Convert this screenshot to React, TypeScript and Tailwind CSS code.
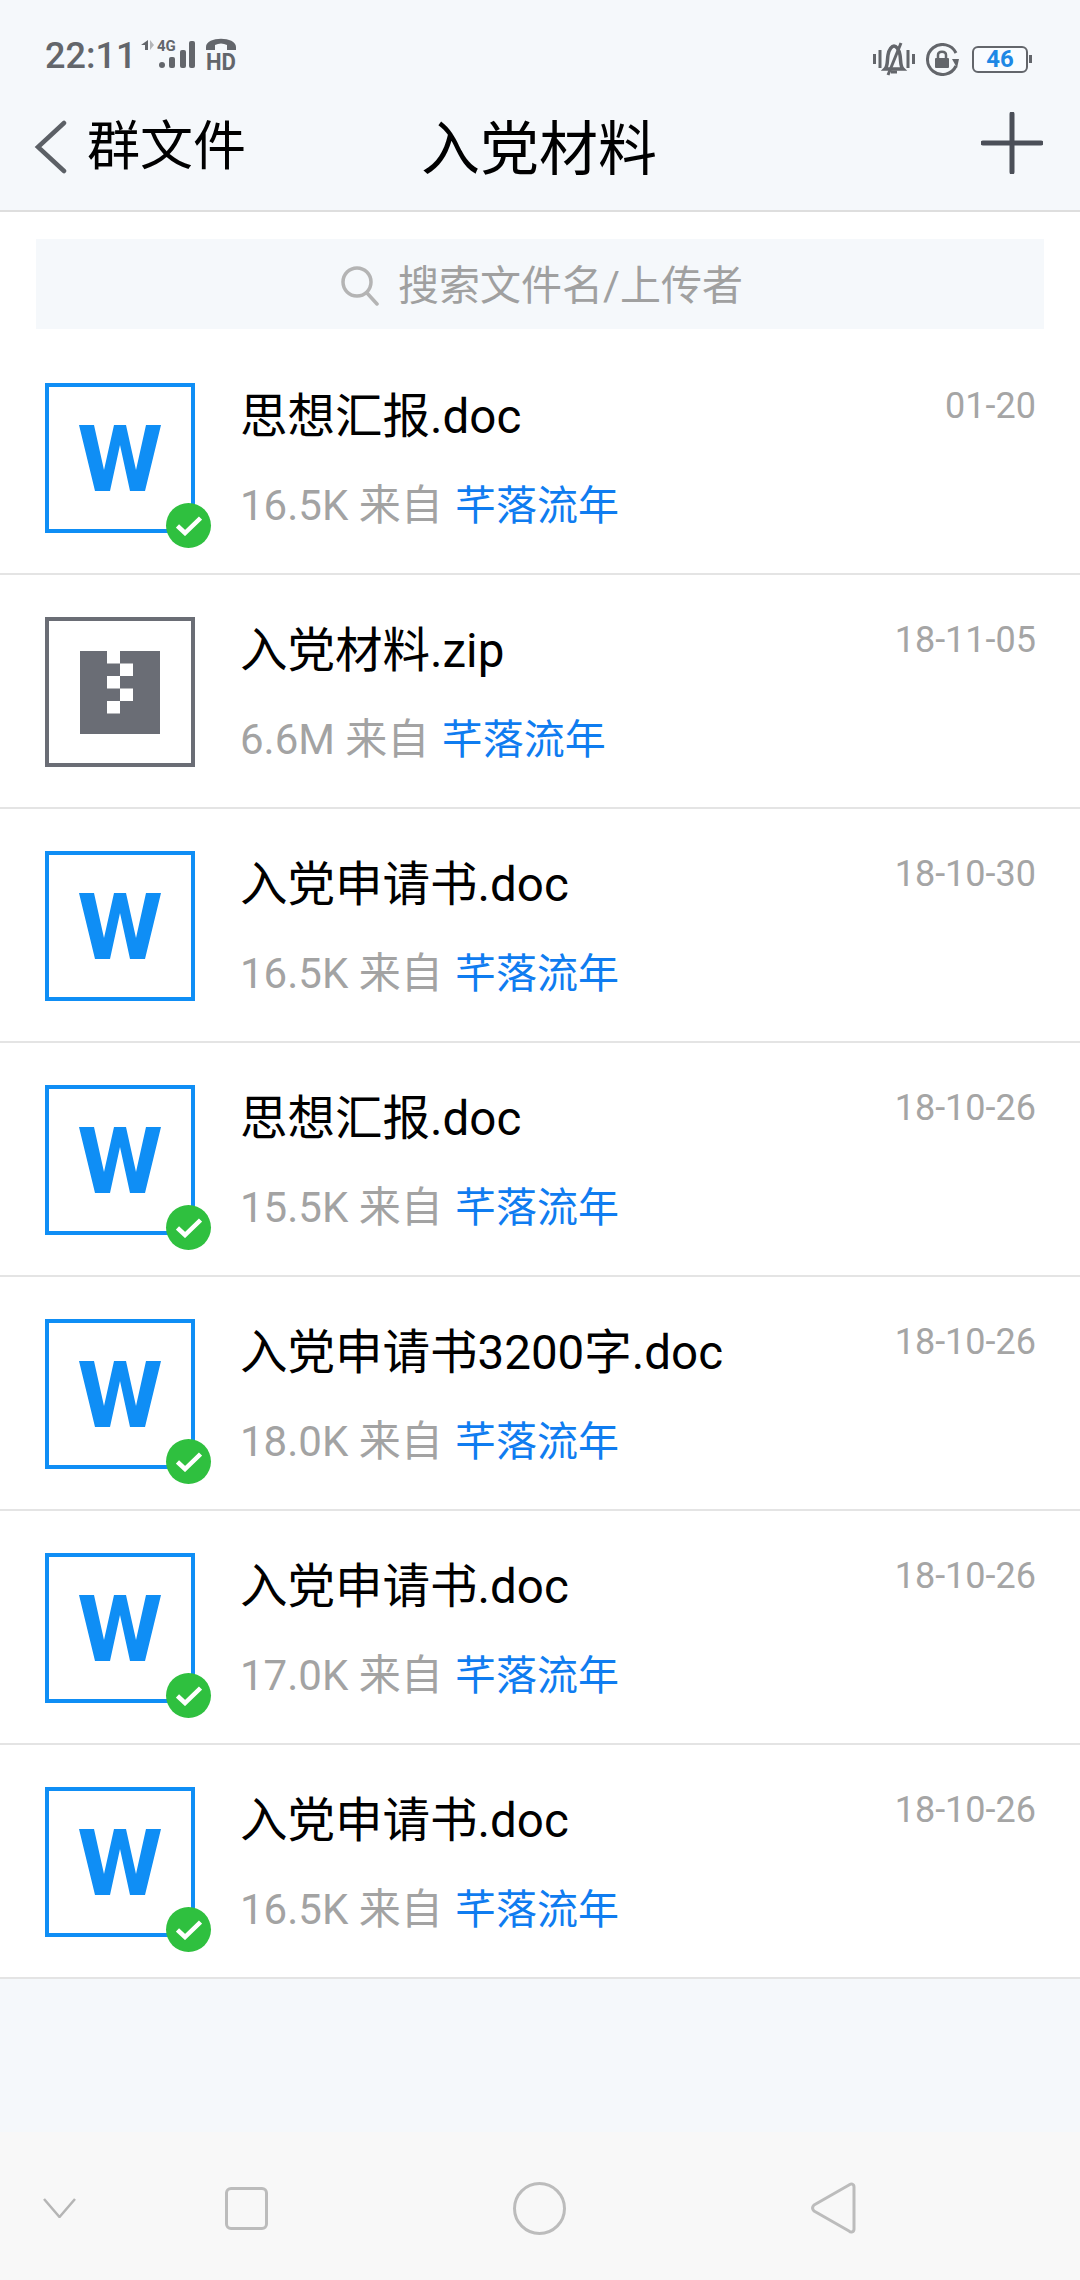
const font = { fontFamily: '"Roboto", "Noto Sans CJK SC", sans-serif' };

const files = [
  { name: "思想汇报.doc", size: "16.5K", date: "01-20", done: true },
  { name: "入党材料.zip", size: "6.6M", date: "18-11-05", zip: true },
  { name: "入党申请书.doc", size: "16.5K", date: "18-10-30" },
  { name: "思想汇报.doc", size: "15.5K", date: "18-10-26", done: true },
  { name: "入党申请书3200字.doc", size: "18.0K", date: "18-10-26", done: true },
  { name: "入党申请书.doc", size: "17.0K", date: "18-10-26", done: true },
  { name: "入党申请书.doc", size: "16.5K", date: "18-10-26", done: true },
];

function WordIcon() {
  return (
    <div className="flex h-[150px] w-[150px] items-center justify-center border-[4px] border-[#0f8ef5] bg-white">
      <svg width="82" height="66" viewBox="0 0 82 66">
        <path d="M0 0H15L25 45L35 0H47L57 45L67 0H82L66 66H51L41 20L31 66H16Z" fill="#0f8ef5" />
      </svg>
    </div>
  );
}

function ZipIcon() {
  return (
    <div className="flex h-[150px] w-[150px] items-center justify-center border-[4px] border-[#6a6d75] bg-white">
      <svg width="80" height="83" viewBox="0 0 80 83">
        <rect width="80" height="83" fill="#6a6d75" />
        <rect x="27" y="0" width="13" height="12.5" fill="#fff" />
        <rect x="40" y="12.5" width="13" height="12.5" fill="#fff" />
        <rect x="27" y="25" width="13" height="12.5" fill="#fff" />
        <rect x="40" y="37.5" width="13" height="12.5" fill="#fff" />
        <rect x="27" y="50" width="13" height="12.5" fill="#fff" />
      </svg>
    </div>
  );
}

function DoneBadge() {
  return (
    <div className="absolute bottom-[-15px] right-[-16px] flex h-[45px] w-[45px] items-center justify-center rounded-full bg-[#2fc03f]">
      <svg width="26" height="20" viewBox="0 0 26 20" fill="none">
        <path d="M1.5 10L9 17L24.5 2" stroke="#fff" strokeWidth="4.5" />
      </svg>
    </div>
  );
}

function FileRow({ name, size, date, done, zip }: { name: string; size: string; date: string; done?: boolean; zip?: boolean }) {
  return (
    <div className="flex h-[234px] border-b-2 border-[#e4e4e4] bg-white pl-[45px] pr-[44px]">
      <div className="relative mt-[42px] h-[150px] w-[150px] shrink-0">
        {zip ? <ZipIcon /> : <WordIcon />}
        {done && <DoneBadge />}
      </div>
      <div className="ml-[45px] flex-1 pt-[44px]">
        <div className="text-[47.5px] leading-[64px] text-black">{name}</div>
        <div className="mt-[28px] flex items-center text-[42px] leading-[58px] text-[#a3a3a3]">
          <span>{size} 来自&nbsp;</span>
          <span className="ml-[2px] text-[41px] text-[#0f7cf0]">芊落流年</span>
        </div>
      </div>
      <div className="pt-[41px] text-[36px] leading-[48px] text-[#a5a5a5]">{date}</div>
    </div>
  );
}

function StatusBar() {
  return (
    <div className="flex h-[90px] items-end justify-between pb-[14px] pl-[45px] pr-[48px] text-[#63666b]">
      <div className="flex items-center">
        <span className="text-[36px] font-medium leading-[40px]">22:11</span>
        <svg className="mb-[4px] ml-[3px] overflow-visible" width="100" height="36" viewBox="0 0 100 36" fill="#63666b">
          <path d="M9 4V14H6V9H2Z" />
          <path d="M11 4L15 9L11 14Z" fill="#b4b6b9" />
          <text x="18" y="15" fontSize="15" fontWeight="700" fontFamily="Roboto">4G</text>
          <rect x="20" y="26" width="6" height="6" rx="3" />
          <rect x="30" y="21" width="6" height="11" rx="2" />
          <rect x="41" y="14" width="6" height="18" rx="2" />
          <rect x="50" y="5" width="6" height="27" rx="2" />
          <path d="M67 11C67 0 97 0 97 11V14H88V9C84 7 80 7 76 9V14H67Z" />
          <text x="67" y="34" fontSize="24" fontWeight="700" fontFamily="Roboto" textLength="30" lengthAdjust="spacingAndGlyphs">HD</text>
        </svg>
      </div>
      <div className="flex items-center">
        <svg width="42" height="34" viewBox="0 0 42 34" fill="none" stroke="#63666b" strokeWidth="3">
          <path d="M1.5 12V22M7 8V26M35 8V26M40.5 12V22" />
          <path d="M12 27C15 24 14 19 15 13C16 7 19 4 21 4C23 4 26 7 27 13C28 19 27 24 30 27Z" strokeWidth="3.5" />
          <path d="M28 1L15 33" />
          <path d="M18 30H24" />
        </svg>
        <svg className="ml-[11px]" width="33" height="33" viewBox="0 0 33 33" fill="none">
          <path d="M30 10A15 15 0 1 0 30 23" stroke="#63666b" strokeWidth="3" />
          <path d="M26 16H33L31 25Z" fill="#63666b" />
          <rect x="9" y="15" width="14" height="10" rx="1" fill="#63666b" />
          <path d="M12 15V12C12 7.5 20 7.5 20 12V15" stroke="#63666b" strokeWidth="2.5" />
        </svg>
        <div className="ml-[13px] flex h-[27px] w-[56px] items-center justify-center rounded-[6px] border-2 border-[#63666b] bg-[#f9fcff] text-[24px] font-bold leading-none text-[#1e88e5]">
          46
        </div>
        <div className="ml-[1px] h-[8px] w-[3px] bg-[#63666b]" />
      </div>
    </div>
  );
}

function NavBar() {
  return (
    <div className="flex h-[148px] items-center bg-[#f8f8f8] pl-[43px] pt-[4px]">
      <svg width="33" height="20" viewBox="0 0 33 20" fill="none" stroke="#b5b5b5" strokeWidth="2.5">
        <path d="M1 1L16.5 19L32 1" />
      </svg>
      <div className="ml-[149px] h-[43px] w-[43px] rounded-[6px] border-[3px] border-[#bcbcbc]" />
      <div className="ml-[245px] h-[53px] w-[53px] rounded-full border-[3px] border-[#bcbcbc]" />
      <svg className="ml-[245px]" width="45" height="52" viewBox="0 0 45 52" fill="none" stroke="#bcbcbc" strokeWidth="3">
        <path d="M38 3C40 1 43 2 43 5V47C43 50 40 51 38 49L3 29C1 27 1 25 3 23Z" strokeLinejoin="round" />
      </svg>
    </div>
  );
}

export default function App() {
  return (
    <div className="flex h-[2280px] w-[1080px] flex-col overflow-hidden bg-[#f5f8fb]" style={font}>
      <StatusBar />
      <div className="flex h-[122px] items-center justify-between border-b-2 border-[#dedede] pl-[33px] pr-[37px]">
        <div className="mb-[6px] flex w-[300px] items-center">
          <svg width="34" height="54" viewBox="0 0 34 54" fill="none" stroke="#5c6066" strokeWidth="4.5" strokeLinecap="round">
            <path d="M31 3L5 27L31 51" />
          </svg>
          <span className="ml-[20px] text-[53px] leading-none text-black">群文件</span>
        </div>
        <span className="mb-[1px] ml-[2px] text-[59px] leading-none text-black">入党材料</span>
        <div className="mb-[14px] flex w-[300px] justify-end">
          <svg width="62" height="62" viewBox="0 0 62 62" stroke="#4b4f58" strokeWidth="5" strokeLinecap="round">
            <path d="M31 2V60M2 31H60" />
          </svg>
        </div>
      </div>
      <div className="bg-white px-[36px] pb-[12px] pt-[27px]">
        <div className="flex h-[90px] items-center justify-center bg-[#f5f8fb] pl-[4px] pt-[4px] text-[41px] leading-none text-[#a0a0a0]">
          <svg width="38" height="40" viewBox="0 0 38 40" fill="none" stroke="#b4b4b4" strokeWidth="3.5" strokeLinecap="round">
            <circle cx="16" cy="16" r="14" />
            <path d="M26 27L36 38" />
          </svg>
          <span className="ml-[19px]">搜索文件名/上传者</span>
        </div>
      </div>
      {files.map((f, i) => (
        <FileRow key={i} {...f} />
      ))}
      <div className="flex-1" />
      <NavBar />
    </div>
  );
}
